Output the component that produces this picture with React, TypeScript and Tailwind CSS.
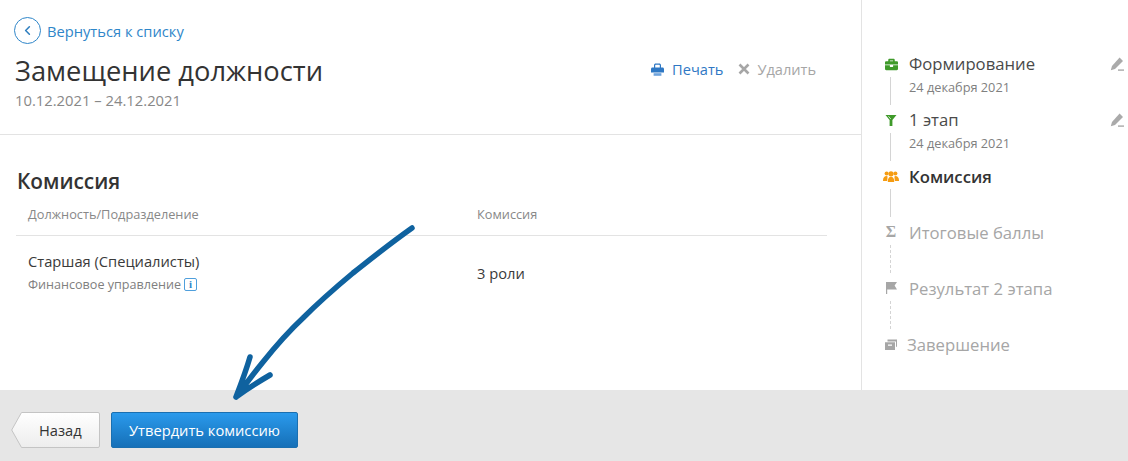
import type { ReactNode } from 'react';
import { ChevronLeft } from 'lucide-react';
import { FaBriefcase } from 'react-icons/fa';

function Pencil() {
  return (
    <svg width="14" height="14" viewBox="0 0 14 14" className="fill-[#aaaaaa]">
      <path d="M9.6 0.6 13 4 5 12 0.8 13.2 2 9Z" />
      <rect x="8" y="12.4" width="6" height="1.4" />
    </svg>
  );
}

function Funnel() {
  return (
    <svg width="12" height="12" viewBox="0 0 12 12" className="fill-[#3f9a2a]">
      <path d="M0.5 1H11.5L7.4 6V12H4.6V6Z" />
      <path d="M3.4 2.2 5.8 5" stroke="#ffffff" strokeWidth="0.7" />
    </svg>
  );
}

function People() {
  return (
    <svg width="16" height="11" viewBox="0 0 16 11" className="fill-[#f59c12]">
      <circle cx="3.6" cy="2.4" r="2" />
      <circle cx="12.4" cy="2.4" r="2" />
      <path d="M0 9.5C0 6.5 1.4 5 3.6 5L4.6 5.4 4.2 10H0Z" />
      <path d="M16 9.5C16 6.5 14.6 5 12.4 5L11.4 5.4 11.8 10H16Z" />
      <circle cx="8" cy="2.8" r="2.6" />
      <path d="M4.8 11C4.8 7.4 6 5.8 8 5.8S11.2 7.4 11.2 11Z" />
    </svg>
  );
}

function Flag() {
  return (
    <svg width="11" height="12" viewBox="0 0 11 12" className="fill-[#a6a6a6]">
      <path d="M0 0H11L8.6 3.6 11 7.4H1.2V12H0Z" />
    </svg>
  );
}

function Box() {
  return (
    <svg width="12" height="11" viewBox="0 0 12 11" className="fill-[#a6a6a6]">
      <path d="M2.5 0.5H12V7.5L11 8V2.5H2.5Z" />
      <path d="M0 3.2H10V11H0ZM3 5.6V6.8H7V5.6Z" fillRule="evenodd" />
    </svg>
  );
}

function PrintIcon() {
  return (
    <svg width="13" height="13" viewBox="0 0 13 13" className="shrink-0 fill-[#2f78c4]">
      <path d="M3 5V2.2C3 1 3.8 0.5 4.8 0.5H8.2C9.2 0.5 10 1 10 2.2V5H8.8V2.2C8.8 1.9 8.6 1.7 8.2 1.7H4.8C4.4 1.7 4.2 1.9 4.2 2.2V5Z" />
      <path d="M1.5 4.4H11.5C12.4 4.4 13 5 13 5.9V9.4H0V5.9C0 5 0.6 4.4 1.5 4.4Z" />
      <path d="M2.6 10.2H10.4V12.8H2.6Z" className="fill-[#6fa3dc]" />
    </svg>
  );
}

function CrossIcon() {
  return (
    <svg width="12" height="12" viewBox="0 0 12 12" className="shrink-0">
      <path d="M1.5 1.5 10.5 10.5M10.5 1.5 1.5 10.5" stroke="#a6a6a6" strokeWidth="2.6" />
    </svg>
  );
}

interface StepProps {
  icon: ReactNode;
  title: string;
  date?: string;
  tone: 'done' | 'active' | 'todo';
  line?: 'solid' | 'dashed';
  editable?: boolean;
  shift?: boolean;
}

function Step({ icon, title, date, tone, line, editable, shift }: StepProps) {
  return (
    <div className="flex h-14">
      <div className="flex w-[18px] shrink-0 flex-col items-center">
        <div className="flex h-6 items-center justify-center">{icon}</div>
        {line === 'solid' && <div className="mt-px mr-px h-7 w-px bg-[#d4d4d4]" />}
        {line === 'dashed' && <div className="mt-px mr-px h-7 w-px border-l border-dashed border-[#d4d4d4]" />}
      </div>
      <div className={`flex-1 ${date ? '' : 'pt-px'} ${shift ? 'ml-[7px]' : 'ml-[9px]'}`}>
        <div
          className={`h-6 text-[16.7px] leading-6 ${
            tone === 'done' ? 'text-[#4a4a4a]' : tone === 'active' ? 'text-[16.5px] font-semibold text-[#333333]' : 'text-[#a6a6a6]'
          }`}
        >
          {title}
        </div>
        {date && <div className="text-[12.75px] leading-[22px] text-[#808080]">{date}</div>}
      </div>
      {editable && (
        <div className="mr-1 flex h-6 items-center">
          <Pencil />
        </div>
      )}
    </div>
  );
}

export default function App() {
  return (
    <div className="relative flex h-[461px] w-[1128px] flex-col overflow-hidden bg-white font-['Open_Sans',sans-serif]">
      <div className="flex h-[390px]">
        {/* Main column */}
        <div className="w-[861px] shrink-0">
          <div className="h-[135px] border-b border-[#e3e3e3] pl-[14px] pr-[45px] pt-[17px]">
            <div className="flex h-[27px] items-center gap-[6px]">
              <div className="flex h-[27px] w-[27px] items-center justify-center rounded-full border border-[#2f86c9]">
                <ChevronLeft size={15} strokeWidth={2.5} className="mr-px text-[#2f7fbf]" />
              </div>
              <span className="mt-[2px] text-[14.7px] text-[#2f86c9]">Вернуться к списку</span>
            </div>
            <div className="mt-[7px] flex items-start justify-between pl-px">
              <div>
                <h1 className="text-[27.3px] leading-[40px] text-[#333333]">Замещение должности</h1>
                <div className="text-[14.8px] leading-[18px] text-[#888888]">10.12.2021 – 24.12.2021</div>
              </div>
              <div className="mt-[6px] flex items-center text-[14.6px] leading-6">
                <PrintIcon />
                <span className="ml-2 text-[#2f78c4]">Печать</span>
                <span className="ml-[15px]">
                  <CrossIcon />
                </span>
                <span className="ml-[7px] text-[#a6a6a6]">Удалить</span>
              </div>
            </div>
          </div>

          <div className="pl-4 pr-[34px] pt-[30px]">
            <h2 className="pl-px text-[20.8px] font-semibold leading-[32px] text-[#333333]">Комиссия</h2>
            <div className="flex h-[39px] items-center border-b border-[#e3e3e3] pb-[3px] pl-3 text-[12.75px] text-[#888888]">
              <div className="w-[449px]">Должность/Подразделение</div>
              <div>Комиссия</div>
            </div>
            <div className="flex items-center pl-3 pt-[13px]">
              <div className="w-[449px]">
                <div className="text-[14.7px] leading-6 text-[#3a3a3a]">Старшая (Специалисты)</div>
                <div className="flex items-center gap-[3px] text-[12.6px] leading-[23px] text-[#808080]">
                  Финансовое управление
                  <span className="flex h-[13px] w-[13px] items-center justify-center rounded-[2px] border border-[#4f9fdc] font-['Liberation_Serif',serif] text-[11px] font-bold leading-none text-[#2f86c9]">
                    i
                  </span>
                </div>
              </div>
              <div className="mt-[2px] text-[14.7px] text-[#3a3a3a]">3 роли</div>
            </div>
          </div>
        </div>

        {/* Stages */}
        <div className="flex-1 border-l border-[#e3e3e3] pl-5 pt-[52px]">
          <Step icon={<FaBriefcase size={13} className="text-[#3f9a2a]" />} title="Формирование" date="24 декабря 2021" tone="done" line="solid" editable />
          <Step icon={<Funnel />} title="1 этап" date="24 декабря 2021" tone="done" line="solid" editable />
          <Step icon={<People />} title="Комиссия" tone="active" line="solid" />
          <Step
            icon={<span className="font-['Liberation_Serif',serif] text-[16px] font-bold leading-none text-[#a6a6a6]">Σ</span>}
            title="Итоговые баллы"
            tone="todo"
            line="dashed"
          />
          <Step icon={<Flag />} title="Результат 2 этапа" tone="todo" line="dashed" />
          <Step icon={<Box />} title="Завершение" tone="todo" shift />
        </div>
      </div>

      {/* Footer */}
      <div className="flex h-[71px] items-start gap-[11px] bg-[#e6e6e6] pl-[11px] pt-[22px]">
        <button className="relative h-9 w-[89px] pl-7 text-left text-[14.7px] text-[#333333]">
          <svg width="89" height="36" viewBox="0 0 89 36" className="absolute left-0 top-0">
            <defs>
              <linearGradient id="backFill" x1="0" y1="0" x2="0" y2="1">
                <stop offset="0" stopColor="#ffffff" />
                <stop offset="1" stopColor="#ededed" />
              </linearGradient>
            </defs>
            <path d="M10.5 0.5H87A1.5 1.5 0 0 1 88.5 2V34A1.5 1.5 0 0 1 87 35.5H10.5L0.7 18Z" fill="url(#backFill)" stroke="#c4c4c4" />
          </svg>
          <span className="relative">Назад</span>
        </button>
        <button className="h-9 w-[187px] rounded-[2px] border border-[#1a6fb0] bg-gradient-to-b from-[#2a9aec] to-[#1670b8] text-[14.7px] text-white">
          Утвердить комиссию
        </button>
      </div>

      {/* Hand-drawn arrow overlay */}
      <svg width="1128" height="461" viewBox="0 0 1128 461" className="pointer-events-none absolute left-0 top-0">
        <path
          d="M412 228C388 245 372 258 353 273C335 288 318 303 303 318C288 332 275 347 263 362C254 373 245 385 236 397M250 357C246 371 241 384 236 397C247 389 258 382 270 375"
          fill="none"
          stroke="#0f629f"
          strokeWidth="5.5"
          strokeLinecap="round"
          strokeLinejoin="round"
        />
      </svg>
    </div>
  );
}
